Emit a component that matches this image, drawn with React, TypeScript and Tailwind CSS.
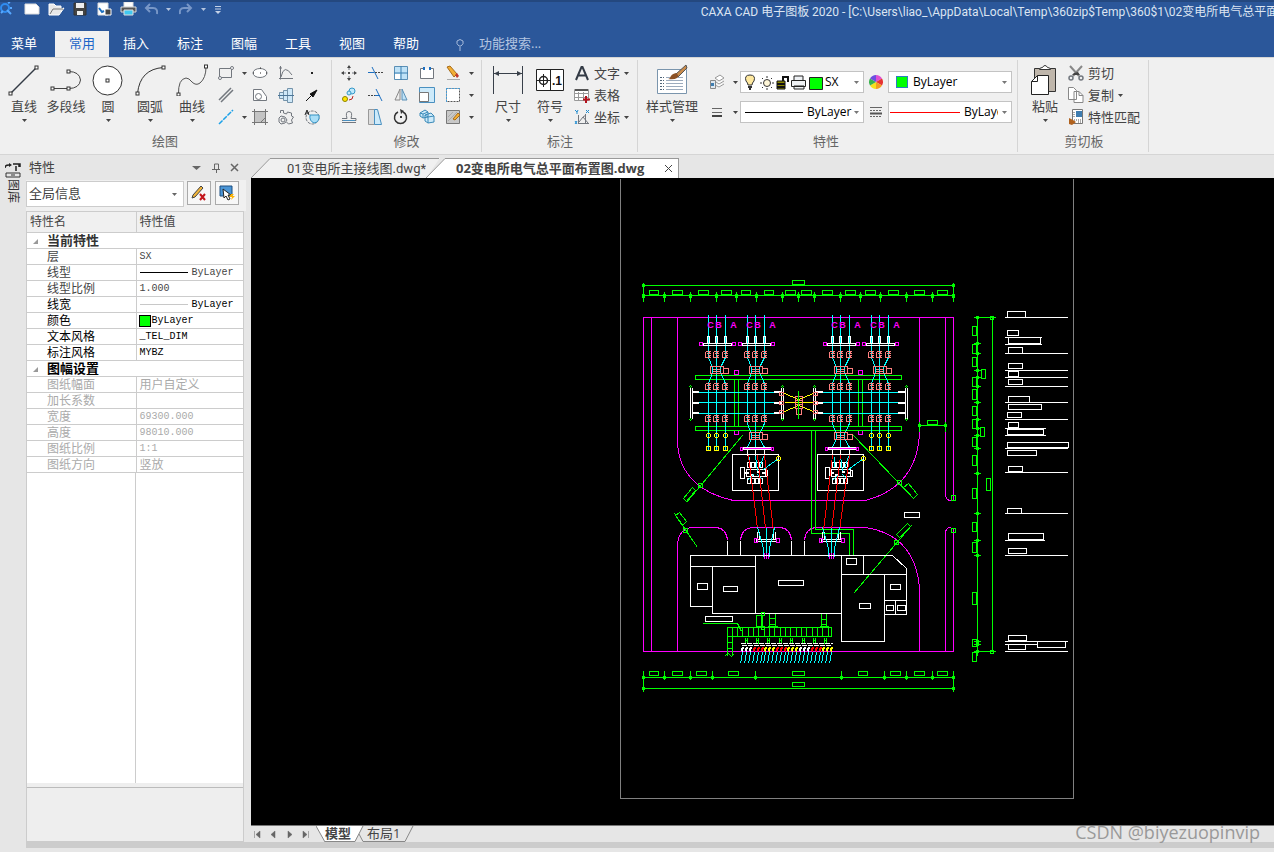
import React, { useState } from 'react';

type IconProps = { w?: number; h?: number; children: React.ReactNode };

const Icon: React.FC<IconProps> = ({ w = 16, h = 16, children }) => (
  <svg width={w} height={h} viewBox={`0 0 ${w} ${h}`} fill="none" stroke="#72777e" className="shrink-0" aria-hidden="true">
    {children}
  </svg>
);

const Caret: React.FC<{ color?: string }> = ({ color = '#444' }) => (
  <svg width="5" height="3" viewBox="0 0 5 3" className="shrink-0" aria-hidden="true">
    <path d="M0 0h5L2.500 3z" fill={color} />
  </svg>
);

/* ---------- large ribbon icons ---------- */

const Node: React.FC<{ x: number; y: number }> = ({ x, y }) => (
  <rect x={x - 1.5} y={y - 1.5} width="3" height="3" fill="#fff" stroke="#333" />
);

const icons = {
  line: (
    <Icon w={32} h={32}>
      <path d="M2.500 29.500 28.500 3.500" stroke="#333a45" strokeWidth="1.5" />
      <Node x={2.5} y={29.5} />
      <Node x={28.5} y={3.5} />
    </Icon>
  ),
  polyline: (
    <Icon w={32} h={32}>
      <path d="M2.500 24.500h16q11 0 12-8.500-1-8.500-12-8.500" stroke="#444" />
      <Node x={2.5} y={24.5} />
      <Node x={18.5} y={24.5} />
      <Node x={18.5} y={7.5} />
    </Icon>
  ),
  circle: (
    <Icon w={32} h={32}>
      <circle cx="15.500" cy="16.500" r="14.500" fill="#fff" stroke="#333" />
      <Node x={15.5} y={16.5} />
    </Icon>
  ),
  arc: (
    <Icon w={32} h={32}>
      <path d="M3.500 29.500Q6 5 29.500 3.500" stroke="#333" />
      <Node x={3.5} y={29.5} />
      <Node x={29.5} y={3.5} />
    </Icon>
  ),
  curve: (
    <Icon w={32} h={32}>
      <path d="M2.500 30.500Q2 15 10 14q3 0 6 4 4 4 8 1 6-5 6-16" stroke="#555" />
      <Node x={2.5} y={30.5} />
      <Node x={30} y={2.5} />
    </Icon>
  ),
  dimension: (
    <Icon w={32} h={32}>
      <path d="M1.500 2v28M30.500 2v28M2 9.500h28" stroke="#39404a" />
      <path d="m2 9.500 5-2.500v5zM30 9.500 25 7v5z" fill="#39404a" stroke="none" />
    </Icon>
  ),
  symbol: (
    <Icon w={32} h={32}>
      <path d="M2.500 5.500h27v21h-27zM16.500 5v22" fill="#fff" stroke="#222" />
      <circle cx="9.500" cy="16.500" r="4" stroke="#222" strokeWidth="1.500" />
      <path d="M3 16.500h13M9.500 10v13" stroke="#222" />
      <text x="18" y="21" fill="#111" stroke="none" fontSize="12" fontWeight="700" fontFamily="Liberation Sans, sans-serif">.1</text>
    </Icon>
  ),
  style: (
    <Icon w={32} h={32}>
      <path d="M1.500 5.500h29v24h-29z" fill="#fff" stroke="#7a95ad" />
      <path d="M4 13.500h4M4 16.500h4M4 19.500h4M4 22.500h4M4 25.500h4" stroke="#4f6478" strokeDasharray="2 1" />
      <path d="M10 13.500h17M10 16.500h17M10 19.500h17M10 22.500h17M10 25.500h17" stroke="#9cabbd" />
      <path d="M30 1 20 10l2 3 9-9z" fill="#c98b4b" stroke="#555" />
      <path d="M20 9q-5 1-6 5-1 1-2 1 6 1 9-1 2-2 1-3z" fill="#8c5124" stroke="none" />
    </Icon>
  ),
  paste: (
    <Icon w={32} h={32}>
      <path d="M5.500 4.500h21v23h-21z" fill="#bfb6ab" stroke="#333" />
      <path d="M10.500 5.500q0-2 3-2 1-2 2.500-2t2.500 2q3 0 3 2z" fill="#fff" stroke="#333" />
      <path d="M8.500 11.500h11v19h-17v-13z" fill="#fff" stroke="#222" />
      <path d="M8.500 11.500v6h-6" stroke="#222" />
    </Icon>
  ),
};

/* ---------- small ribbon icons ---------- */

const drawIcons = [
  [
    <Icon><path d="M1.500 3.500h12v9h-12z" /><circle cx="14" cy="3" r="1.500" fill="#fff" /><circle cx="2" cy="13" r="1.500" fill="#fff" /></Icon>,
    <Icon><ellipse cx="8" cy="8" rx="7" ry="4.500" fill="#fff" /><path d="M8 8h1M1 8h1M14 8h1M8 3h1" stroke="#222" /></Icon>,
    <Icon><path d="M2.500 1v13.500M1 13.500h14M3 12q3-14 11-2M1 3h3" /></Icon>,
    <Icon><path d="M7 8h2" stroke="#222" strokeWidth="2" /></Icon>,
  ],
  [
    <Icon><path d="M1 13 13 1M3 15 15 3" strokeWidth="1.500" /></Icon>,
    <Icon><path d="M1.500 2.500h8l5 7v4h-13z" fill="#fff" /><circle cx="6.500" cy="9.500" r="3" fill="#fff" /></Icon>,
    <Icon><path d="M1.500 5.500h4v6h-4zM5.500 3.500h4v10h-4zM9.500 1.500h5v14h-5z" fill="#cfe8f8" stroke="#7493aa" /><path d="M0 8.500h16" stroke="#4d7698" /></Icon>,
    <Icon><path d="M2 14 9 7" stroke="#111" /><path d="m13 3-7 4 3 3z" fill="#111" stroke="#111" /></Icon>,
  ],
  [
    <Icon><path d="M1 15 15 1" stroke="#1da1e8" strokeWidth="1.500" strokeDasharray="5 1" /></Icon>,
    <Icon><path d="M2.500 2.500h11v11h-11z" fill="#c4c4c4" /><path d="M0 2.500h16M0 13.500h16M2.500 0v16M13.500 0v16M9 13l4-4" stroke="#777" /></Icon>,
    <Icon><path d="M2.500 4V1.500h3V4l3 1 1-2 4 1v3l2 1-2 3 1 3-4 1-2-2" /><path d="m1 9 2-2 4 1 2 3-2 3-4 1-2-2z" /><circle cx="5" cy="11" r="2" /></Icon>,
    <Icon><circle cx="8.500" cy="8.500" r="6.500" strokeDasharray="3 1" /><path d="M6 6h9q1 7-5 8-5-2-4-8z" fill="#a9def7" stroke="#3593c4" /><path d="M1 6l2-5 2 5M2 4h3" stroke="#222" /></Icon>,
  ],
];

const editIcons = [
  [
    <Icon><path d="M8 1v4M8 11v4M1 8h4M11 8h4" /><path d="m8 0 2 3H6zM8 16l2-3H6zM0 8l3-2v4zM16 8l-3-2v4zM7 7h2v2H7z" fill="#444" stroke="none" /></Icon>,
    <Icon><path d="M1 7.500h6M5 2l6 12" stroke="#1d6fc0" /><path d="M8 7.500h8" stroke="#444" strokeDasharray="2 1" /></Icon>,
    <Icon><path d="M1.500 1.500h13v13h-13z" fill="#bfe2f7" stroke="#5a8fb5" /><path d="M2 9h5v5H2z" fill="#fff" stroke="none" /><path d="M8 1v14M1 8h14" stroke="#3b7fb0" /></Icon>,
    <Icon><path d="M5 3.500H1.500v10h13v-10H11" fill="#fff" /><path d="M5 2v3M11 2v3" stroke="#1d6fc0" strokeWidth="2" /></Icon>,
    <Icon><path d="m2 2 3-1 7 8-3 3z" fill="#f2ae35" stroke="#a76c1a" /><path d="m10 10 2-2 2 3-2 2z" fill="#c0392b" stroke="none" /><path d="M2 14.500h13" stroke="#aaa" /></Icon>,
  ],
  [
    <Icon><circle cx="4" cy="12" r="2.500" fill="#ffe600" stroke="#8d8200" /><circle cx="11" cy="4" r="3" fill="#bfe8fb" stroke="#3498c8" /><circle cx="8" cy="6" r="2" fill="#bfe8fb" stroke="#3498c8" /><path d="M8 13q4 0 4-4" stroke="#b22" /></Icon>,
    <Icon><path d="M1 8.500h7" stroke="#444" strokeDasharray="2 1" /><path d="M8 8.500h5M9 2l6 12" stroke="#1d6fc0" /></Icon>,
    <Icon><path d="M7 2v11H2z" fill="#eee" stroke="#888" /><path d="M9 2v11h5z" fill="#bfe2f7" stroke="#5a8fb5" /></Icon>,
    <Icon><path d="M.500.500h15v15H.500z" fill="#cdeafa" stroke="#4a90c0" /><path d="M.500 5.500h9v9h-9z" fill="#fff" stroke="#777" /></Icon>,
    <Icon><path d="M1.500 1.500h13v13h-13z" fill="#fff" stroke="#555" strokeDasharray="2 1" /><path d="M1 1.500h14M1.500 1v14" stroke="#4a9ad0" strokeDasharray="2 1" /></Icon>,
  ],
  [
    <Icon><path d="M1 13.500h14M1 9.500h5q-2-7 2-7t2 7h5v2H1" /><path d="M2 11.500h12" stroke="#4a90c0" /></Icon>,
    <Icon><path d="M1.500.500h6v15h-6z" fill="#ddd" stroke="#999" /><path d="M7.500 .500h3l4 15h-7z" fill="#cdeafa" stroke="#4a90c0" /></Icon>,
    <Icon><path d="M10 3a6 6 0 1 1-5 0" stroke="#333" strokeWidth="1.500" /><path d="m7 0 4 2-3 3z" fill="#333" stroke="none" /><path d="M7 8h2" stroke="#333" strokeWidth="2" /></Icon>,
    <Icon><path d="M1 4l5-3 3 2v5L4 9 1 7zM6 6l6-2 3 3v6l-6 1-3-2z" fill="#cdeafa" stroke="#3b8ab8" /><path d="m6 6 3 2v6M9 8l6-1M1 4l3 1v4M4 5l5-2" stroke="#3b8ab8" /></Icon>,
    <Icon><path d="M1.500 1.500h13v13h-13z" fill="#c8c8c8" stroke="#777" /><path d="m3 8 5-5M3 12l9-9" stroke="#aaa" /><path d="m13 4-5 6 2 1 5-5z" fill="#f2ae35" stroke="#a76c1a" /></Icon>,
  ],
];

const textIcon = (
  <Icon><path d="M2 15 7.500 2h1L14 15M4 10.500h8" stroke="#333a45" strokeWidth="2" /></Icon>
);
const tableIcon = (
  <Icon><path d="M.500 2.500h14v11H.500zM0 6.500h15M0 10.500h15M4.500 5v9M9.500 5v9" fill="#fff" stroke="#999" /><path d="M1 2h13v2H1z" fill="#555" stroke="none" /><path d="M12 9v7M9 12.500h7" stroke="#b3121d" strokeWidth="2" /></Icon>
);
const coordIcon = (
  <Icon><path d="M4.500 6v9M4 14.500h11M5 13l4-5 5 6M11.500 5v9M9 8l3-2" /><path d="m1 1 2 2 1-2M3 3v2M1 12l2 3M3 12l-2 3M12 1l3 3M15 1l-3 3" stroke="#1d8bd0" /></Icon>
);
const cutIcon = (
  <Icon><path d="m2 1 9 10M14 1 5 11" stroke="#888" strokeWidth="2" /><path d="m6 8 4-1 2 3H4z" fill="#444" stroke="none" /><circle cx="3" cy="13" r="2" strokeWidth="1.500" /><circle cx="13" cy="13" r="2" strokeWidth="1.500" /></Icon>
);
const copyIcon = (
  <Icon><path d="M.500.500h5l3 3v9h-8zM6 4.500h5l4 4v7H6z" fill="#fff" stroke="#888" /><path d="M11 4.500v4h4" stroke="#888" /></Icon>
);
const matchIcon = (
  <Icon><path d="M4.500.500h10v14h-10z" fill="#fff" stroke="#777" /><path d="M8 2h6v6H8z" fill="#3f7db0" stroke="none" /><path d="M6 3v6M6 11h7M10 13h4" stroke="#555" strokeDasharray="1 1" /><path d="m1 9 4 2 3 2-4 3-3-1z" fill="#b0621f" stroke="none" /></Icon>
);

const BigButton: React.FC<{ icon: React.ReactNode; label: string; drop?: boolean; wide?: boolean }> = ({ icon, label, drop = true, wide }) => (
  <button className={`${wide ? 'w-[66px]' : 'w-[42px]'} flex shrink-0 flex-col items-center pt-[2px] hover:bg-[#dfe9f5]`}>
    {icon}
    <span className="mt-[2px] whitespace-nowrap leading-4">{label}</span>
    <span className="mt-[5px] flex h-1">{drop && <Caret />}</span>
  </button>
);

const ToolGrid: React.FC<{ rows: React.ReactNode[][]; name: string }> = ({ rows, name }) => (
  <div className="flex flex-col">
    {rows.map((row, r) => (
      <div key={r} className="flex h-[22px] items-center">
        {row.map((icon, c) => (
          <button key={c} aria-label={`${name} ${r + 1}-${c + 1}`} className="flex w-[26px] justify-center hover:bg-[#dfe9f5]">
            {icon}
          </button>
        ))}
      </div>
    ))}
  </div>
);

const DropColumn: React.FC<{ shown: boolean[] }> = ({ shown }) => (
  <div className="flex w-2 flex-col items-end">
    {shown.map((s, i) => (
      <span key={i} className="flex h-[22px] items-center">{s && <Caret />}</span>
    ))}
  </div>
);

const ListButton: React.FC<{ icon: React.ReactNode; label: string; drop?: boolean }> = ({ icon, label, drop }) => (
  <button className="flex h-[22px] items-center gap-1 whitespace-nowrap leading-5 hover:bg-[#dfe9f5]">
    {icon}
    <span>{label}</span>
    {drop && <Caret />}
  </button>
);

const RibbonGroup: React.FC<{ title: string; className: string; children: React.ReactNode }> = ({ title, className, children }) => (
  <section className={`flex shrink-0 flex-col border-r border-[#d5d5d5] ${className}`}>
    <div className="flex h-[71px] pt-[2px]">{children}</div>
    <h2 className="h-[21px] pr-1 text-center leading-5 text-[#666]">{title}</h2>
  </section>
);

const Combo: React.FC<{ label: string; value: string; children?: React.ReactNode; selectClass?: string }> = ({ label, value, children, selectClass = 'flex-1' }) => (
  <div className="flex h-[22px] w-[124px] items-center border border-[#c3c3c3] bg-white pr-1 text-[12px] text-black">
    {children}
    <select aria-label={label} className={`min-w-0 appearance-none bg-transparent outline-none ${selectClass}`}>
      <option>{value}</option>
    </select>
    <span className="ml-auto flex"><Caret color="#777" /></span>
  </div>
);

const Ribbon: React.FC = () => (
  <div className="flex overflow-hidden border-y border-[#d5d5d5] bg-[#f0f0f0] py-[2px] text-[13px] text-[#444]">
    <RibbonGroup title="绘图" className="w-[332px] pl-[3px]">
      <BigButton icon={icons.line} label="直线" />
      <BigButton icon={icons.polyline} label="多段线" drop={false} />
      <BigButton icon={icons.circle} label="圆" />
      <BigButton icon={icons.arc} label="圆弧" />
      <BigButton icon={icons.curve} label="曲线" />
      <ToolGrid name="绘图" rows={drawIcons.map((r) => r.slice(0, 1))} />
      <DropColumn shown={[true, false, true]} />
      <ToolGrid name="曲线工具" rows={drawIcons.map((r) => r.slice(1))} />
    </RibbonGroup>

    <RibbonGroup title="修改" className="w-[150px] pl-1">
      <ToolGrid name="修改" rows={editIcons} />
      <DropColumn shown={[true, true, true]} />
    </RibbonGroup>

    <RibbonGroup title="标注" className="w-[156px] pl-[5px]">
      <BigButton icon={icons.dimension} label="尺寸" />
      <BigButton icon={icons.symbol} label="符号" />
      <div className="flex flex-col pl-[3px]">
        <ListButton icon={textIcon} label="文字" drop />
        <ListButton icon={tableIcon} label="表格" />
        <ListButton icon={coordIcon} label="坐标" drop />
      </div>
    </RibbonGroup>

    <RibbonGroup title="特性" className="w-[380px] pl-px">
      <BigButton icon={icons.style} label="样式管理" wide />
      <div className="flex flex-col gap-2 pt-[9px]">
        <div className="flex items-center">
          <button aria-label="图层" className="flex w-[35px] items-center justify-between pl-1 pr-[2px]">
            <Icon><path d="m6 4 5-3 4 3-5 3zM7 8l3 2 5-3M6 11l4 2 5-3" stroke="#999" fill="#fff" /><path d="M1.500 6.500h5v8h-5z" fill="#dfe8ef" stroke="#888" /><path d="M2 9h3v3H2z" fill="#3f7db0" stroke="none" /></Icon>
            <Caret />
          </button>
          <Combo label="当前图层" value="SX">
            <svg width="82" height="18" viewBox="0 0 82 18" fill="none" className="mr-[2px] shrink-0" aria-hidden="true">
              <path d="M7 12q0-2-2-4-2-6 4-6t4 6q-2 2-2 4z" fill="#ffe9a0" stroke="#333" />
              <path d="M7 14h4M8 16h2" stroke="#333" strokeWidth="2" />
              <circle cx="26" cy="10" r="3.500" fill="#fff7d8" stroke="#333" />
              <path d="M26 3v2M26 15v2M19 10h2M31 10h2M21 5l1 1M30 14l1 1M31 5l-1 1M21 15l1-1" stroke="#333" />
              <path d="M36 8h8v8h-8z" fill="#8a8600" stroke="#111" />
              <path d="M36 11h8M36 14h8M42 8V4h5v5" stroke="#111" strokeWidth="2" />
              <path d="M53 7V3h9v4M50.500 7.500h14v6h-14zM53 13h10v3H53z" fill="#eef1f4" stroke="#222" />
              <path d="M68.500 4.500h13v12h-13z" fill="#0f0" stroke="#222" />
            </svg>
          </Combo>
          <button aria-label="颜色" className="flex w-6 justify-center">
            <Icon w={14} h={14}>
              <g stroke="none">
                <path d="M7 7 7 0a7 7 0 0 1 6 3.500z" fill="#e14fd0" />
                <path d="m7 7 6-3.500a7 7 0 0 1 0 7z" fill="#e63232" />
                <path d="m7 7 6 3.500A7 7 0 0 1 7 14z" fill="#f39c1f" />
                <path d="m7 7 0 7a7 7 0 0 1-6-3.500z" fill="#f5e11d" />
                <path d="m7 7-6 3.500a7 7 0 0 1 0-7z" fill="#37b24d" />
                <path d="M7 7 1 3.500A7 7 0 0 1 7 0z" fill="#6d4fe0" />
              </g>
            </Icon>
          </button>
          <Combo label="当前颜色" value="ByLayer">
            <span className="ml-[7px] mr-[5px] h-3 w-3 shrink-0 border border-[#2a7fc0] bg-[#00ff00]" />
          </Combo>
        </div>
        <div className="flex items-center">
          <button aria-label="线型" className="flex w-[35px] items-center justify-between pl-1 pr-[2px]">
            <Icon><path d="M3 4.500h10M3 8.500h10" stroke="#666" /><path d="M3 12h10" stroke="#444" strokeWidth="2" /></Icon>
            <Caret />
          </button>
          <Combo label="当前线型" value="ByLayer">
            <span className="ml-1 mr-1 h-px w-[58px] shrink-0 bg-black" />
          </Combo>
          <button aria-label="线宽" className="flex w-6 justify-center">
            <Icon w={12} h={16}><path d="M0 3.500h12" stroke="#666" /><path d="M0 6.500h12M0 12.500h12" stroke="#666" strokeDasharray="2 1" /><path d="M0 9.500h12" stroke="#555" strokeWidth="2" /></Icon>
          </button>
          <Combo label="当前线宽" value="ByLayer" selectClass="w-[34px]">
            <span className="ml-px mr-1 h-px w-[70px] shrink-0 bg-[#f00]" />
          </Combo>
        </div>
      </div>
    </RibbonGroup>

    <RibbonGroup title="剪切板" className="w-[131px] pl-[6px]">
      <BigButton icon={icons.paste} label="粘贴" />
      <div className="flex flex-col pl-[2px]">
        <ListButton icon={cutIcon} label="剪切" />
        <ListButton icon={copyIcon} label="复制" drop />
        <ListButton icon={matchIcon} label="特性匹配" />
      </div>
    </RibbonGroup>
  </div>
);

/* ---------- header ---------- */

const menus = ['常用', '插入', '标注', '图幅', '工具', '视图', '帮助'];

const Header: React.FC = () => {
  const [active, setActive] = useState('常用');
  return (
    <header className="overflow-hidden bg-[#2b579a] text-[13px] text-white">
      <div className="flex h-[31px] items-start border-t-2 border-[#24487f]">
        <div className="flex w-[55%] shrink-0 items-center">
          <Icon w={18} h={14}><circle cx="5" cy="6" r="4" stroke="#2f8cf0" strokeWidth="2" /><path d="m7 8 4 4M1 11l2-2M8 1l2-1M10 6h2" stroke="#57a8ff" strokeWidth="2" /></Icon>
          <button aria-label="新建" className="ml-1"><Icon w={20} h={14}><path d="M3 2h11l3 3v7H3z" fill="#fff" stroke="#ddd" /></Icon></button>
          <button aria-label="打开" className="ml-1"><Icon w={20} h={14}><path d="M3 2h5l2 2h5v3l3-1-5 7H3z" fill="#e8e8e8" stroke="#fff" /><path d="m4 12 3-5h10" stroke="#777" /></Icon></button>
          <button aria-label="保存" className="ml-1"><Icon w={20} h={14}><path d="M4 1h12v12H4z" fill="#444" stroke="#333" /><path d="M6 1h8v5H6zM7 9h6v4H7z" fill="#eee" stroke="none" /></Icon></button>
          <button aria-label="另存为" className="ml-1"><Icon w={20} h={14}><path d="M4 1h10v12H4z" fill="#fff" stroke="#ddd" /><path d="M11 7h6v6h-6z" fill="#444" stroke="#fff" /><path d="m5 6 3 4 2-1" stroke="#1d6fc0" strokeWidth="2" /></Icon></button>
          <button aria-label="打印" className="ml-1"><Icon w={20} h={14}><path d="M6 0h9v5H6z" fill="#fff" stroke="#ddd" /><path d="M3 5h15v5H3z" fill="#555" stroke="#ddd" /><path d="M6 8h9v5H6z" fill="#40c8f0" stroke="#ddd" /></Icon></button>
          <button aria-label="撤销" className="ml-1 flex items-center gap-[6px]"><Icon w={18} h={14}><path d="M4 6h7q5 0 4 6M8 2 4 6l4 4" stroke="#7897c7" strokeWidth="2" /></Icon><Caret color="#b5c5df" /></button>
          <button aria-label="重做" className="ml-[6px] flex items-center gap-[6px]"><Icon w={18} h={14}><path d="M14 6H7Q2 6 3 12M10 2l4 4-4 4" stroke="#7897c7" strokeWidth="2" /></Icon><Caret color="#b5c5df" /></button>
          <button aria-label="自定义快速访问" className="ml-2"><Icon w={8} h={12}><path d="M1 3.500h6M1 6h6" stroke="#c5d2e7" /><path d="M1 8h6l-3 3z" fill="#c5d2e7" stroke="none" /></Icon></button>
        </div>
        <h1 className="whitespace-nowrap font-['Roboto','Noto_Sans_CJK_SC',sans-serif] text-[12px] leading-5 text-[#dce5f2]">
          CAXA CAD 电子图板 2020 - [C:\Users\liao_\AppData\Local\Temp\360zip$Temp\360$1\02变电所电气总平面
        </h1>
      </div>
      <nav className="flex h-[26px] items-center">
        <button className="mr-[7px] h-full w-12">菜单</button>
        {menus.map((m) => (
          <button
            key={m}
            onClick={() => setActive(m)}
            className={`h-full w-[54px] ${m === active ? 'bg-[#f0f0f0] text-[#1b66c9]' : 'hover:bg-[#3a67ab]'}`}
          >
            {m}
          </button>
        ))}
        <span className="ml-5 flex"><Icon w={14} h={14}><path d="M6 9Q3 7 4 4q3-3 6 0 1 3-2 5z" stroke="#a9bddc" /><path d="M6 11h2M6 13h2" stroke="#a9bddc" /></Icon></span>
        <input aria-label="功能搜索" placeholder="功能搜索..." className="ml-3 w-40 bg-transparent outline-none placeholder:text-[#b4c5e0]" />
      </nav>
    </header>
  );
};

/* ---------- property panel ---------- */

type Row = { name: string; value?: React.ReactNode; tone?: 'dark' | 'gray'; cjk?: boolean };

const swatchLine = (cls: string) => (
  <span className="flex items-center gap-1"><span className={`h-px w-12 ${cls}`} />ByLayer</span>
);

const sections: { title: string; tone: string; rows: Row[] }[] = [
  {
    title: '当前特性',
    tone: 'text-[#333]',
    rows: [
      { name: '层', value: 'SX' },
      { name: '线型', value: swatchLine('bg-black') },
      { name: '线型比例', value: '1.000' },
      { name: '线宽', value: swatchLine('bg-[#c8c8c8]'), tone: 'dark' },
      { name: '颜色', value: <span className="flex items-center gap-px"><span className="-ml-px h-3 w-3 border border-black bg-[#00ff00]" />ByLayer</span>, tone: 'dark' },
      { name: '文本风格', value: '_TEL_DIM', tone: 'dark' },
      { name: '标注风格', value: 'MYBZ', tone: 'dark' },
    ],
  },
  {
    title: '图幅设置',
    tone: 'text-black',
    rows: [
      { name: '图纸幅面', value: '用户自定义', tone: 'gray', cjk: true },
      { name: '加长系数', tone: 'gray' },
      { name: '宽度', value: '69300.000', tone: 'gray' },
      { name: '高度', value: '98010.000', tone: 'gray' },
      { name: '图纸比例', value: '1:1', tone: 'gray' },
      { name: '图纸方向', value: '竖放', tone: 'gray', cjk: true },
    ],
  },
];

const toneClass = (tone?: string) => (tone === 'gray' ? 'text-[#aaa]' : tone === 'dark' ? 'text-black' : 'text-[#444]');

const PropertyPanel: React.FC = () => (
  <aside className="flex w-[220px] shrink-0 flex-col">
    <div className="flex h-[25px] items-center gap-2 bg-[#e6e6e6] pl-[3px] pr-[6px] text-[#444]">
      <h2 className="mr-auto text-[13px]">特性</h2>
      <button aria-label="菜单"><Icon w={10} h={10}><path d="M0 3h9L4.500 7z" fill="#666" stroke="none" /></Icon></button>
      <button aria-label="固定" className="ml-px"><Icon w={10} h={10}><path d="M3.500 6V1h4v5M1 6.500h8M5.500 7v3" stroke="#666" /></Icon></button>
      <button aria-label="关闭" className="ml-px"><Icon w={10} h={10}><path d="m1 1 7 7M8 1 1 8" stroke="#666" strokeWidth="1.5" /></Icon></button>
    </div>
    <div className="flex h-[31px] items-start gap-[3px] bg-[#f0f0f0] pt-px">
      <div className="flex h-[26px] w-[158px] items-center border border-[#ccc] bg-white pl-[2px] pr-[6px]">
        <select aria-label="特性范围" className="flex-1 appearance-none bg-transparent text-[13px] text-[#444] outline-none">
          <option>全局信息</option>
        </select>
        <Caret color="#666" />
      </div>
      <button aria-label="快速编辑" className="flex h-6 w-6 items-center justify-center border border-[#aaa] bg-[#f7f7f7]">
        <Icon><path d="M2 10 10 1l2 2-8 9-3 1z" fill="#f2b53a" stroke="#444" /><path d="m9 9 5 6M14 9l-5 6" stroke="#c3151c" strokeWidth="2" /></Icon>
      </button>
      <button aria-label="快速选择" className="ml-px flex h-6 w-6 items-center justify-center border border-[#aaa] bg-[#f7f7f7]">
        <Icon><path d="M1 1h12v10H1z" fill="#4a95d6" stroke="#1c4f80" /><path d="m4 4 1 9 2-2 2 4 2-1-2-4h3z" fill="#fff" stroke="#222" /><path d="m12 9-2 3h3l-1 3 4-4h-3l2-2z" fill="#ffb400" stroke="none" /></Icon>
      </button>
    </div>
    <div className="mr-[2px] flex flex-1 flex-col border border-[#ccc] bg-[#eee]">
      <div className="flex flex-1 flex-col bg-white">
        <table className="w-full table-fixed border-collapse text-left text-[12px]">
          <thead>
            <tr className="h-5 border-b border-[#ccc] bg-[#f0f0f0] text-[#444]">
              <th scope="col" className="w-[109px] border-r border-[#ccc] p-0 pl-[3px] font-normal leading-5">特性名</th>
              <th scope="col" className="p-0 pl-[3px] font-normal leading-5">特性值</th>
            </tr>
          </thead>
          {sections.map((s) => (
            <tbody key={s.title}>
              <tr className="h-4 border-b border-[#ccc]">
                <th colSpan={2} className={`p-0 text-[13px] leading-[15px] ${s.tone}`}>
                  <span className="flex items-center">
                    <svg width="20" height="6" viewBox="0 0 20 6" aria-hidden="true"><path d="M6 6h5V1z" fill="#999" /></svg>
                    {s.title}
                  </span>
                </th>
              </tr>
              {s.rows.map((r) => (
                <tr key={r.name} className={`h-4 border-b border-[#ccc] ${toneClass(r.tone)}`}>
                  <th scope="row" className="border-r border-[#ccc] p-0 pl-5 font-normal leading-[15px]">{r.name}</th>
                  <td
                    className={`p-0 pl-[3px] leading-[15px] ${
                      r.cjk ? 'text-[12px]' : "font-['Liberation_Mono','Noto_Sans_CJK_SC',monospace] text-[10px]"
                    }`}
                  >
                    {r.value}
                  </td>
                </tr>
              ))}
            </tbody>
          ))}
        </table>
        <div className="w-[109px] flex-1 border-r border-[#ccc]" />
      </div>
      <div className="mt-1 h-[54px] border-t border-[#bbb]" />
    </div>
  </aside>
);

/* ---------- drawing ---------- */

const GREEN = '#00ff00';
const CYAN = '#00ffff';
const MAGENTA = '#ff00ff';
const SALMON = '#ff8080';
const YELLOW = '#ffff00';

type Box = [number, number, number, number];
const boxPath = (list: Box[]) => list.map(([a, b, c, d]) => `M${a} ${b}H${c}V${d}H${a}Z`).join('');

const topTicks = [643, 664, 690, 716, 736, 756, 782, 798, 814, 840, 860, 880, 906, 932, 953];
const topLabels = [[649, 658], [672, 682], [698, 708], [721, 731], [741, 750], [764, 773], [785, 795], [801, 811], [822, 832], [845, 855], [865, 875], [888, 898], [914, 924], [937, 947]];
const bottomTicks = [643, 664, 690, 712, 755, 841, 884, 906, 932, 953];
const bottomLabels = [[649, 658], [672, 682], [696, 706], [728, 738], [792, 804], [858, 867], [890, 900], [914, 924], [937, 947]];
const sideTicks = [317, 343, 353, 370, 377, 386, 402, 419, 428, 435, 448, 473, 513, 540, 555, 641, 644, 651];
const sideLabels: Box[] = [
  [972, 326, 976, 335], [972, 344, 976, 353], [972, 357, 976, 366], [972, 377, 976, 386], [972, 389, 976, 399],
  [972, 406, 976, 415], [972, 419, 976, 428], [972, 437, 976, 446], [972, 455, 976, 465], [972, 488, 976, 498],
  [972, 522, 976, 531], [972, 542, 976, 552], [972, 592, 976, 604], [972, 639, 976, 646], [972, 652, 976, 661],
  [981, 369, 985, 378], [980, 427, 984, 436], [986, 478, 990, 490],
];
const noteBoxes: Box[] = [
  [1007, 311, 1025, 317], [1007, 330, 1018, 335], [1008, 337, 1040, 343], [1008, 347, 1022, 353], [1008, 363, 1022, 368],
  [1008, 371, 1018, 376], [1008, 379, 1022, 384], [1008, 396, 1029, 402], [1008, 404, 1041, 409], [1007, 412, 1021, 417],
  [1008, 422, 1018, 427], [1007, 429, 1043, 434], [1007, 442, 1068, 447], [1007, 450, 1036, 455], [1008, 466, 1022, 471],
  [1007, 508, 1021, 513], [1008, 533, 1043, 539], [1008, 548, 1026, 553], [1008, 635, 1026, 640], [1008, 644, 1025, 649],
  [1037, 641, 1065, 647],
];
const noteLines = [
  [317, 1067], [337, 1041], [344, 1041], [353, 1067], [370, 1067], [377, 1067], [386, 1067], [402, 1067], [419, 1067], [428, 1045],
  [435, 1045], [448, 1067], [472, 1067], [513, 1067], [540, 1044], [555, 1067], [641, 1067], [644, 1037], [651, 1067],
];
const roomLabels: Box[] = [
  [697, 583, 707, 589], [723, 586, 737, 591], [778, 580, 803, 585], [846, 558, 856, 564], [859, 603, 870, 608],
  [890, 584, 900, 589], [886, 605, 893, 610], [897, 605, 905, 610], [904, 512, 919, 517], [705, 616, 732, 621],
];

const Bay: React.FC<{ x: number; outgoing?: boolean }> = ({ x, outgoing }) => {
  const cols = [x - 8, x, x + 9];
  return (
    <g>
      <g stroke={CYAN}>
        {cols.map((c, i) => {
          const m = x + (i - 1) * 4;
          const tail = outgoing ? 'V450' : `V423L${m} 434V438L${c} 447V455`;
          return <path key={c} d={`M${c} 314V357L${m} 367V372L${c} 383${tail}`} />;
        })}
      </g>
      <g stroke={SALMON}>
        {[354, 386, 418].map((y) =>
          cols.map((c) => <path key={`${c}-${y}`} d={`M${c - 3} ${y - 3}h5M${c - 3} ${y - 3}v6M${c - 2} ${y - 1}h4M${c - 1} ${y + 1}h3M${c - 3} ${y + 3}h5M${c + 1} ${y - 3}v2M${c + 1} ${y + 1}v2`} />)
        )}
        {(outgoing ? [366] : [366, 432]).map((y) => (
          <path key={y} d={`M${x - 6} ${y}h13v7h-13zM${x + 7} ${y + 2}h5v5h-5zM${x - 4} ${y + 3}h3M${x} ${y + 3}h4M${x - 4} ${y + 5}h8`} />
        ))}
      </g>
      <g stroke="#fff">
        <path d={`M${x - 13} 343h28v2h-28z`} />
        {cols.map((c) => <path key={c} d={`M${c - 1} 336h2v7h-2z`} />)}
      </g>
      <g stroke={MAGENTA}>
        <rect x={x - 17} y="342" width="3" height="3" />
        <rect x={x + 16} y="342" width="3" height="3" />
      </g>
      <g fill={MAGENTA} fontSize="9" fontWeight="700" fontFamily="Liberation Sans, sans-serif" textAnchor="middle">
        <text x={x - 6} y="327">C</text>
        <text x={x + 2} y="327">B</text>
        <text x={x + 17} y="327">A</text>
      </g>
      {outgoing && (
        <g stroke={YELLOW}>
          {cols.map((c) => (
            <React.Fragment key={c}>
              <circle cx={c} cy="435" r="2" />
              <rect x={c - 2} y="446" width="4" height="4" />
            </React.Fragment>
          ))}
        </g>
      )}
    </g>
  );
};

const Transformer: React.FC<{ x: number }> = ({ x }) => (
  <g stroke="#fff">
    <path d={`M${x - 23} 454h46v36h-46z`} />
    <path d={`M${x - 12} 447h28v2h-28z`} />
    <path d={`M${x - 15} 447h2v3h-2zM${x + 16} 447h2v3h-2zM${x - 12} 448h27`} stroke={MAGENTA} />
    <path d={`M${x - 15} 467h4v11h-4zM${x - 9} 469h19v7h-19zM${x + 10} 470h2v6h-2z`} />
    <path d={`M${x - 8} 462h3v5h-3zM${x - 4} 462h3v5h-3zM${x} 462h3v5h-3zM${x + 4} 462h3v5h-3zM${x - 8} 478h3v5h-3zM${x - 4} 478h3v5h-3zM${x} 478h3v5h-3zM${x + 4} 478h3v5h-3z`} />
    <path d={`M${x - 12} 472h5M${x - 6} 474h4M${x + 1} 471h3M${x + 6} 472h4`} strokeWidth="2" />
    <path d={`M${x - 8} 449v6M${x} 449v6M${x + 9} 449v6`} />
    <path d={`M${x + 23} 458 ${x + 8} 469M${x - 6} 456v10M${x} 456l2 15M${x + 8} 456l-4 12M${x - 8} 480l6-6M${x + 2} 474l5 5`} stroke={CYAN} />
    <circle cx={x + 23} cy="458" r="2" stroke={YELLOW} />
  </g>
);

const Entry: React.FC<{ x: number }> = ({ x }) => (
  <g>
    <path d={`M${x - 10} 539h20v2h-20zM${x - 9} 531v8M${x - 7} 531v8M${x + 7} 531v8M${x + 9} 531v8`} stroke="#fff" />
    <path d={`M${x - 9} 527 ${x - 3} 548v8M${x} 527v29M${x + 8} 527 ${x + 3} 548v8`} stroke={CYAN} />
    <path d={`M${x - 12} 538h3v4h-3zM${x + 10} 538h3v4h-3zM${x - 2} 552v6M${x} 552v6M${x + 2} 552v6M${x - 4} 555h8`} stroke={MAGENTA} />
  </g>
);

const outletColors = ['#fff', '#f00', YELLOW, '#f00', YELLOW, '#fff', '#f00', YELLOW];

const Drawing: React.FC = () => (
  <svg viewBox="251 178 1023 647" preserveAspectRatio="xMinYMin meet" className="min-h-0 w-full flex-1 bg-black" fill="none" role="img" aria-label="变电所电气总平面布置图">
    <g transform="translate(.5 .5)" shapeRendering="crispEdges" strokeWidth="1">
      <path d="M620 178V798H1073V178" stroke="#808080" />

      {/* site boundary and roads */}
      <g stroke={MAGENTA}>
        <path d="M953 500V317H643V651H953V527" />
        <path d="M651 317V651M677 317V443Q680 488 733 500H865Q917 486 919 432V317" />
        <path d="M945 317V495Q946 500 950 500M950 527Q945 527 945 533V651" />
        <path d="M677 651V543Q679 527 693 527H716Q726 528 727 540M740 540Q741 528 752 527H780Q790 528 791 540" />
        <path d="M804 540Q805 528 815 527H865Q915 535 919 588V651" />
        <path d={boxPath([[734, 370, 738, 374], [734, 430, 738, 434], [858, 370, 862, 374], [858, 430, 862, 434]])} />
      </g>
      <path d="M727 540V555M740 540V555M791 540V555M804 540V555" stroke="#fff" />

      {/* dimension chains */}
      <g stroke={GREEN}>
        <path d="M643 285H953M643 295H953M643 282V301M953 282V301" />
        <path d="M643 677H953M643 688H953M643 670V691M953 670V691" />
        <path d={topTicks.map((x) => `M${x} 291V301M${x - 1} 294h2v3h-2z`).join('')} />
        <path d={bottomTicks.map((x) => `M${x} 670V679M${x - 1} 676h2v2h-2z`).join('')} />
        <path d="M642 284h2v2h-2zM952 284h2v2h-2zM642 687h2v2h-2zM952 687h2v2h-2z" />
        <path d={boxPath(topLabels.map(([a, b]) => [a, 290, b, 294] as Box))} />
        <path d={boxPath(bottomLabels.map(([a, b]) => [a, 671, b, 675] as Box))} />
        <path d="M792 280H804V284H792zM792 682H804V686H792z" />
        <path d="M977 317V655M992 317V651M973 317H995M973 651H995" />
        <path d={sideTicks.map((y) => `M973 ${y}H980M976 ${y - 1}h2v2h-2z`).join('')} />
        <path d="M990 316h3v3h-3zM990 650h3v3h-3z" />
        <path d={boxPath(sideLabels)} />
        <path d="M919 425H945M919 421V431M945 421V431M918 424h2v2h-2zM944 424h2v2h-2zM927 420H937V424H927z" />
        <path d="M951 495h4v5h-4zM951 528h4v4h-4z" />
      </g>

      {/* cable trench */}
      <g stroke={GREEN}>
        <path d="M695 375H901V379H695zM695 426H901V430H695z" />
        <path d="M734 379V426M738 379V426M858 379V426M862 379V426" />
        <path d="M811 430V533H849V555M815 430V529H853V555" />
      </g>

      {/* lightning rod leaders */}
      <g stroke={GREEN}>
        <path d="M742 435 686 502M853 435 914 499M674 513 697 547M911 525 853 593" />
        <path d="M698 483h4v4h-4zM897 480h4v4h-4zM683 528h4v4h-4zM894 540h4v4h-4z" />
        <path d="M683 498 692 487 695 490 686 501zM903 487 908 483 917 494 913 498zM675 515 679 512 686 521 682 525zM896 534 907 523 910 526 899 537z" />
      </g>

      {/* bus bars */}
      <path d="M697 392H777M697 402H777M697 413H777M820 392H900M820 402H900M820 413H900" stroke={CYAN} />
      <path d="M690 387V418M692 387V418M781 387V418M783 387V418M813 387V418M815 387V418M905 387V418M907 387V418" stroke="#fff" />
      <path d={[391, 402, 412].map((y) => `M692 ${y}h6v1h-6zM774 ${y}h7v1h-7zM815 ${y}h7v1h-7zM898 ${y}h7v1h-7z`).join('')} stroke="#fff" />
      <path d={[690, 782, 814, 906].map((x) => `M${x} 385l1 1-1 1-1-1zM${x} 418l1 1-1 1-1-1z`).join('')} stroke={GREEN} />

      <Bay x={716} outgoing />
      <Bay x={755} />
      <Bay x={840} />
      <Bay x={879} outgoing />

      {/* bus coupler */}
      <path d="M784 393 798 399 813 393M784 402H813M784 411 798 405 813 411" stroke={YELLOW} />
      <path d="M795 396h7v12h-7zM796 408h5v6h-5zM795 400h7M795 404h7" stroke={SALMON} />
      <path d={[392, 401, 410].map((y) => `M779 ${y}h4v3h-4zM813 ${y}h4v3h-4z`).join('')} stroke={SALMON} />
      <path d="M798 390V418" stroke={GREEN} />

      <Transformer x={755} />
      <Transformer x={840} />
      <path d="M748 455 757 528M757 455 765 528M764 455 773 530M832 455 823 530M840 455 831 530M849 455 839 530" stroke="#f00" />
      <Entry x={766} />
      <Entry x={831} />

      {/* building */}
      <g stroke="#fff">
        <path d="M690 555H892L906 568V614H884V641H841V613H712V606H690z" />
        <path d="M690 566H755M712 566V613M755 555V613M841 555V613M841 574H906M884 574V614M863 555V574M884 600H906M895 600V614" />
        <path d={boxPath(roomLabels)} />
      </g>

      {/* outlet frame */}
      <g stroke={GREEN}>
        <path d="M702 623H737L741 631M727 655V627H831V636H727M732 636V655M727 642H732M727 648H732M725 655 728 653 731 656 733 654" />
        <path d={Array.from({ length: 19 }, (_, i) => `M${732 + i * 5 + Math.floor(i / 3)} 627V636`).join('')} />
        <path d="M756 615H761V626H756zM761 612h3v3h-3zM761 626h3v3h-3zM762 615V627M769 613V627M775 613V627M769 618H775M769 624H775M767 626H777M821 613V627M826 613V627M821 619H826M821 624H826M819 626H828" />
        <path d={[746, 757, 768, 780, 791, 803, 814, 825].map((x) => `M${x - 1} 637V643M${x + 1} 637V643M${x - 1} 640h2`).join('')} />
      </g>
      <path d="M740 643H832M741 645H831" stroke="#fff" strokeDasharray="5 1" />
      {outletColors.map((color, i) => {
        const x = 742 + Math.round(i * 11.6);
        return (
          <g key={x}>
            <path d={`M${x} 646V648L${x - 1} 651M${x + 4} 646V648L${x + 3} 651M${x + 8} 646V648L${x + 7} 651`} stroke={color} strokeWidth="2" />
            <path d={`M${x} 652 ${x - 2} 663M${x + 4} 652 ${x + 2} 663M${x + 8} 652 ${x + 6} 663`} stroke={CYAN} />
          </g>
        );
      })}

      {/* notes */}
      <g stroke="#fff">
        <path d={noteLines.map(([y, x2]) => `M1004 ${y}H${x2}`).join('')} />
        <path d={boxPath(noteBoxes)} />
      </g>
    </g>
  </svg>
);

const DocumentTabs: React.FC = () => (
  <div className="flex h-[23px] items-end overflow-hidden bg-[#e6e6e6] font-['Roboto','Noto_Sans_CJK_SC',sans-serif] text-[13px] text-[#444]">
    <svg width="20" height="20" viewBox="0 0 20 20" className="shrink-0" aria-hidden="true">
      <path d="M0 20 19 .500h1V20z" fill="#f0f0f0" />
      <path d="M0 20 19 .500h1" fill="none" stroke="#999" />
    </svg>
    <button className="h-5 w-[155px] shrink-0 whitespace-nowrap border-t border-[#999] bg-[#f0f0f0] pl-4 text-left leading-[17px]">01变电所主接线图.dwg*</button>
    <svg width="20" height="20" viewBox="0 0 20 20" className="shrink-0" aria-hidden="true">
      <path d="M0 0h14L0 20z" fill="#f0f0f0" />
      <path d="M0 20 19 .500h1V20z" fill="#fff" />
      <path d="M0 .500h13M0 20 19 .500h1" fill="none" stroke="#999" />
    </svg>
    <div className="flex h-5 w-[233px] shrink-0 items-center justify-between border-r border-t border-[#999] bg-white pl-[10px] pr-[5px]">
      <button className="whitespace-nowrap font-['Open_Sans','Noto_Sans_CJK_SC',sans-serif] font-bold leading-[17px]">02变电所电气总平面布置图.dwg</button>
      <button aria-label="关闭文档"><Icon w={9} h={9}><path d="m1 1 7 7M8 1 1 8" stroke="#444" /></Icon></button>
    </div>
  </div>
);

const LayoutTabs: React.FC = () => (
  <div className="flex h-[17px] items-center overflow-hidden border-t border-[#777] bg-[#e6e6e6] text-[13px] text-[#444]">
    <div className="flex w-[65px] shrink-0 items-center justify-between pl-[2px] pr-[6px]">
      {['M1.500 1v7M7 1v7L3 4.500z', 'M6 1v7L2 4.500z', 'M3 1v7l4-3.500z', 'M7.500 1v7M2 1v7l4-3.500z'].map((d, i) => (
        <button key={d} aria-label={['首个', '上一个', '下一个', '末个'][i]}>
          <Icon w={9} h={9}><path d={d} fill="#666" stroke="#666" strokeWidth=".5" /></Icon>
        </button>
      ))}
    </div>
    <svg width="9" height="16" viewBox="0 0 9 16" className="shrink-0" aria-hidden="true"><path d="M0 0h9v16z" fill="#fff" /><path d="m0 0 9 16" stroke="#888" /></svg>
    <button className="h-4 shrink-0 border-b border-[#888] bg-white font-bold leading-[13px]">模型</button>
    <svg width="16" height="16" viewBox="0 0 16 16" className="shrink-0" aria-hidden="true"><path d="M0 0h12L3 16H0z" fill="#fff" /><path d="M12 0 4 15.500H0M8 8l4 7.500h4" fill="none" stroke="#888" /></svg>
    <button className="h-4 shrink-0 border-b border-[#888] leading-[13px]">布局1</button>
    <svg width="14" height="16" viewBox="0 0 14 16" className="shrink-0" aria-hidden="true"><path d="M13 0 5 15.500H0" fill="none" stroke="#888" /></svg>
  </div>
);

const App: React.FC = () => (
  <div className="relative flex min-h-screen flex-col overflow-hidden bg-[#e6e6e6] font-['Open_Sans','Noto_Sans_CJK_SC',sans-serif]">
    <Header />
    <Ribbon />
    <div className="flex flex-1">
      <div className="flex w-[26px] shrink-0 justify-center pt-2">
        <button className="flex h-11 w-4 flex-col items-center text-[12px] leading-3 text-[#333]">
          <Icon><path d="M0 5q0-3 4-3M8 1h7v3M11 3v5M14 1v3" stroke="#222" strokeWidth="1.500" /><path d="m4 0 3 2-3 2z" fill="#222" stroke="none" /><path d="M1 10h14v4H1zM6 12h4" stroke="#333" /></Icon>
          <span className="[text-orientation:sideways] [writing-mode:vertical-rl]">图库</span>
        </button>
      </div>
      <div className="flex min-w-0 flex-1 flex-col">
        <main className="flex min-h-0 flex-1">
          <PropertyPanel />
          <div className="ml-[5px] flex min-w-0 flex-1 flex-col">
            <DocumentTabs />
            <Drawing />
            <LayoutTabs />
          </div>
        </main>
        <div className="mb-[4px] h-[6px] bg-[#ccc]" />
      </div>
    </div>
    <p className="absolute bottom-[10px] right-[14px] text-[18px] leading-5 text-[#999]">CSDN @biyezuopinvip</p>
  </div>
);

export default App;
